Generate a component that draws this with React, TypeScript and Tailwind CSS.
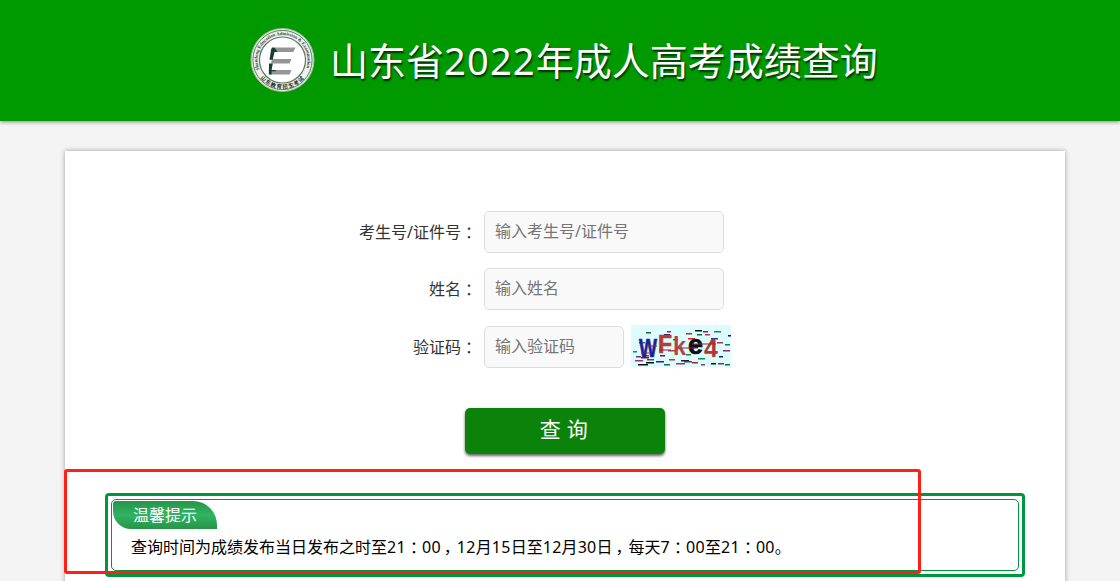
import type { ReactNode } from "react";

const noise: [number, number, number, string][] = [
  [15, 7, 5, "#20603a"], [36, 6, 4, "#b02040"], [55, 8, 6, "#b03040"], [64, 5, 7, "#111"], [72, 6, 5, "#802060"], [83, 6, 7, "#2b8050"],
  [33, 9, 6, "#1a1a90"], [57, 13, 7, "#d02020"], [66, 9, 5, "#0a6a40"], [74, 9, 5, "#c03050"], [80, 13, 7, "#3030b0"], [97, 10, 3, "#101060"],
  [42, 14, 5, "#20705a"], [8, 17, 6, "#308060"], [86, 17, 6, "#b03050"], [94, 19, 5, "#207040"], [2, 26, 4, "#407a50"], [92, 25, 7, "#a02060"],
  [5, 31, 5, "#2050a0"], [12, 30, 6, "#c02050"], [29, 30, 5, "#801040"], [55, 29, 5, "#208050"], [88, 31, 4, "#1a1a80"], [67, 33, 7, "#1a8060"],
  [4, 35, 8, "#c02070"], [16, 34, 7, "#107050"], [25, 36, 8, "#2020a0"], [38, 34, 6, "#c03040"], [50, 35, 8, "#301050"], [61, 37, 6, "#b02030"],
  [7, 39, 10, "#111"], [15, 37, 8, "#111"], [33, 39, 6, "#306050"], [45, 38, 9, "#b03050"], [53, 36, 8, "#206040"], [70, 39, 4, "#8040a0"],
  [80, 38, 5, "#111"], [87, 38, 6, "#a02040"], [94, 39, 5, "#206050"], [10, 32, 8, "#6a2020"], [37, 25, 7, "#d03040"], [58, 22, 9, "#802030"],
];

function Logo() {
  return (
    <svg width="66" height="66" viewBox="0 0 66 66" className="shrink-0">
      <defs>
        <path id="arc-top" d="M10.4 42.6A25 25 0 1 1 56.6 42.6" />
        <path id="arc-bottom" d="M9.5 48.5A28.5 28.5 0 0 0 57.5 48.5" />
      </defs>
      <circle cx="33.5" cy="33" r="31.5" fill="#e9eee9" stroke="#a5b9a5" strokeWidth="1" />
      <circle cx="33.5" cy="33" r="29.6" fill="#eef2ee" stroke="#63806a" strokeWidth="1" />
      <circle cx="33.5" cy="33" r="23" fill="#fff" stroke="#5b7561" strokeWidth="1.2" />
      <text fontSize="4.8" fontFamily="Liberation Serif, serif" fontWeight="700" fill="#2b4733">
        <textPath href="#arc-top" textLength="96" lengthAdjust="spacingAndGlyphs">Shandong Education Admission &amp; Examination</textPath>
      </text>
      <text fontSize="5.4" fontFamily="Noto Sans CJK SC, sans-serif" fontWeight="700" fill="#1b3022">
        <textPath href="#arc-bottom" startOffset="3" textLength="50">山东教育招生考试</textPath>
      </text>
      <path d="M25.5 20.5h21l-2.2 4.5H25zM23 32h19.5l-2 4.5H22zM21 43h21.5l-2 4.5H20.5z" fill="#959595" />
      <path d="M25.5 20.5h-2.2l-1.2 1.8-1.6 10.4h3.2l1.8-7.7h3zM20 36.5h3.8L22.6 43h4v1.2h-4v3.3h-2.8z" fill="#193e29" />
    </svg>
  );
}

function Captcha() {
  return (
    <svg width="100" height="42" viewBox="0 0 100 42" className="ml-[7px] -mt-0.5">
      <rect width="100" height="42" fill="#dcfcfe" />
      {noise.map(([x, y, w, color], i) => (
        <rect key={i} x={x} y={y} width={w} height="1.5" fill={color} />
      ))}
      <g fontFamily="Liberation Sans, sans-serif" fontWeight="700" strokeWidth="0.7">
        <text x="8" y="32" fontSize="26" fill="#1e1e96" stroke="#1e1e96" textLength="18" lengthAdjust="spacingAndGlyphs">W</text>
        <text x="27" y="28" fontSize="25" fill="#b43b3b" stroke="#b43b3b" textLength="14" lengthAdjust="spacingAndGlyphs">F</text>
        <text x="42" y="30" fontSize="25" fill="#b44444" textLength="13" lengthAdjust="spacingAndGlyphs">k</text>
        <text x="57" y="29" fontSize="28" fill="#0c0c14" stroke="#0c0c14" textLength="15" lengthAdjust="spacingAndGlyphs">e</text>
        <text x="73" y="32" fontSize="25" fill="#b93232">4</text>
      </g>
      <path d="M28 25h12M50 23h14M61 19h24M17 21h9M10 28h8" stroke="#8d2638" strokeWidth="1.2" />
    </svg>
  );
}

function Colon() {
  return <span className="relative top-px font-['Noto_Sans_CJK_TC',sans-serif]">：</span>;
}

function Comma() {
  return <span className="pl-[3px] pr-[5px] [font-feature-settings:'halt']">，</span>;
}

function Digits({ children }: { children: string }) {
  return <span className="tracking-[0.3px]">{children}</span>;
}

function Field({ label, placeholder, short, children }: { label: string; placeholder: string; short?: boolean; children?: ReactNode }) {
  return (
    <div className="flex items-center h-[42px]">
      <label className="w-[414px] pr-0.5 pb-0.5 text-right text-[#333]">{label}<Colon /></label>
      <input
        placeholder={placeholder}
        className={`${short ? "w-[140px]" : "w-60"} h-[42px] ml-[5px] px-2.5 pb-0.5 rounded-[5px] border border-[#ddd] bg-[#f9f9f9] placeholder:text-[#757575] outline-none`}
      />
      {children}
    </div>
  );
}

export default function App() {
  return (
    <div className="h-[581px] overflow-hidden flex flex-col bg-[#f4f4f4] text-base font-['Noto_Sans','Noto_Sans_CJK_SC',sans-serif]">
      <header className="h-[121px] shrink-0 flex items-start pl-[249px] pt-[27px] bg-[#009900] shadow-[0_1px_4px_rgba(0,0,0,0.45)]">
        <Logo />
        <h1 className="ml-[15px] h-[66px] leading-[66px] whitespace-nowrap text-[38px] text-white [text-shadow:1px_2px_2px_rgba(0,0,0,0.7)]">
          山东省<span className="tracking-[1.2px]">2022</span>年成人高考成绩查询
        </h1>
      </header>

      <main className="w-[1000px] h-[600px] shrink-0 mt-[30px] ml-[65px] pt-[60px] bg-white shadow-[0_0_5px_rgba(0,0,0,0.35)]">
        <form className="flex flex-col">
          <Field label="考生号/证件号" placeholder="输入考生号/证件号" />
          <div className="h-[15px]" />
          <Field label="姓名" placeholder="输入姓名" />
          <div className="h-4" />
          <Field label="验证码" placeholder="输入验证码" short>
            <Captcha />
          </Field>
          <button type="button" className="w-[200px] h-[46px] mt-10 mx-auto pb-0.5 pr-0.5 rounded-[5px] bg-[#0b830b] text-[21px] tracking-[0.3px] text-white shadow-[0_2px_3px_rgba(0,0,0,0.6)]">
            查 询
          </button>
        </form>

        <section className="w-[920px] h-[84px] mt-[39px] mx-auto p-[3px] rounded-[4px] border-3 border-[#009640]">
          <div className="h-full pl-px pt-px rounded-[5px] border border-[#009640]">
            <h2 className="w-[104px] h-7 leading-7 pl-5 rounded-tl-[3px] rounded-tr-[24px] rounded-bl-[18px] bg-linear-to-b from-[#289447] via-[#2fb463] to-[#289447] text-white">
              温馨提示
            </h2>
            <p className="pl-[18px] mt-[5px] leading-6 whitespace-nowrap text-black">
              查询时间为成绩发布当日发布之时至<Digits>21</Digits><Colon /><Digits>00</Digits><Comma /><Digits>12</Digits>月<Digits>15</Digits>日至<Digits>12</Digits>月<Digits>30</Digits>日<Comma />每天<Digits>7</Digits><Colon /><Digits>00</Digits>至<Digits>21</Digits><Colon /><Digits>00</Digits>。
            </p>
          </div>
        </section>
      </main>

      {/* highlight over the notice */}
      <div className="absolute left-16 top-[469px] w-[857px] h-[105px] rounded-[3px] border-3 border-[#ff2015] pointer-events-none" />
    </div>
  );
}
